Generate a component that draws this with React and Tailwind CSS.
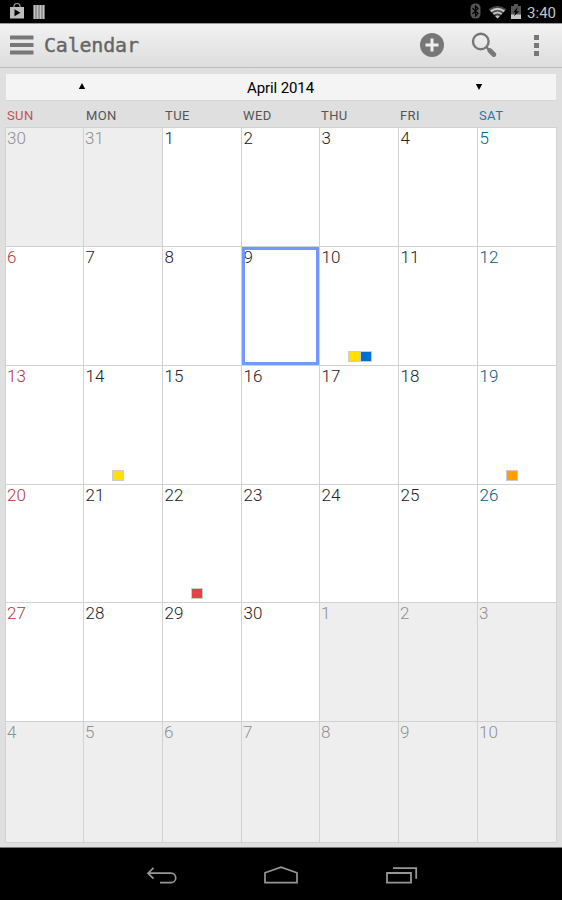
import React from "react";

const DAYS = ["SUN", "MON", "TUE", "WED", "THU", "FRI", "SAT"];

const EVENTS = {
  10: ["bg-[#ffe000]", "bg-[#0070d0]"],
  14: ["bg-[#ffe000]"],
  19: ["bg-[#ffa000]"],
  22: ["bg-[#e94045]"],
};

const CELLS = Array.from({ length: 42 }, (_, i) => {
  const n = i - 1;
  if (n < 1) return { day: 30 + i, muted: true };
  if (n > 30) return { day: n - 30, muted: true };
  return { day: n, muted: false };
});

function textColor(col, muted) {
  if (muted) return "text-[#909090]";
  if (col === 0) return "text-[#b03a36]";
  if (col === 6) return "text-[#006088]";
  return "text-[#222]";
}

function StatusBar() {
  return (
    <div className="flex h-[23px] shrink-0 items-center bg-black pl-[9px] pr-[6px]">
      <svg width="16" height="17" viewBox="0 0 16 17" className="-mt-[2px]">
        <path d="M5 6V4q0-2.5 3-2.5T11 4v2" fill="none" stroke="#999" strokeWidth="1.2" />
        <path d="M1 5h14v11.5H1z" fill="#bdbdbd" />
        <path d="M5.5 7.2v7l6-3.5z" fill="#000" />
      </svg>
      <svg width="12" height="14" viewBox="0 0 12 14" className="ml-[8px]">
        <path d="M0.5 0h11v14H0.5z" fill="#777" />
        <path d="M1.5 0v14M4.5 0v14M7.5 0v14M10.5 0v14" stroke="#c4c4c4" strokeWidth="1.8" />
      </svg>
      <div className="flex-1" />
      <svg width="11" height="16" viewBox="0 0 11 16" className="-mt-px mr-[7px]">
        <rect x="0.5" y="0.5" width="10" height="15" rx="4.5" fill="#555" />
        <path d="M2.5 5l5.5 5.5L5.5 13V3L8 5.5 2.5 11" fill="none" stroke="#000" strokeWidth="1.2" />
      </svg>
      <svg width="19" height="14" viewBox="0 0 19 14" className="mr-[4px]">
        <path d="M0.5 4.3Q9.5-3 18.5 4.3L9.5 13.5z" fill="#444" />
        <path d="M2.7 6.4Q9.5 1.2 16.3 6.4" fill="none" stroke="#c6c6c6" strokeWidth="2.2" />
        <path d="M5.3 9Q9.5 5.9 13.7 9" fill="none" stroke="#c6c6c6" strokeWidth="2" />
        <path d="M7.3 11.2Q9.5 9.8 11.7 11.2L9.5 13.5z" fill="#c6c6c6" />
      </svg>
      <svg width="10" height="15" viewBox="0 0 10 15" className="-mt-px mr-[6px]">
        <path d="M3 0h4v2h3v13H0V2h3z" fill="#555" />
        <path d="M0 10.5h10V15H0z" fill="#c6c6c6" />
        <path d="M6.8 3L2.2 8.2h2.3L3 12.3 8 7.2H5.4z" fill="#000" />
      </svg>
      <span className="mt-[3px] text-[15px] leading-none text-[#c4c4c4]">3:40</span>
    </div>
  );
}

function Header() {
  return (
    <div className="flex h-[45px] shrink-0 items-center border-b border-t border-b-[#bcbcbc] border-t-[#999] bg-linear-to-b from-[#f2f2f2] to-[#dddddd] pb-px pl-[10px]">
      <svg width="24" height="20" viewBox="0 0 24 20" fill="#777">
        <rect x="0" y="0.5" width="23.5" height="4" rx="0.6" />
        <rect x="0" y="8" width="23.5" height="4" rx="0.6" />
        <rect x="0" y="15.5" width="23.5" height="4" rx="0.6" />
      </svg>
      <span className="ml-[10px] font-['DejaVu_Sans_Mono',monospace] text-[20px] leading-none tracking-[-0.2px] text-[#666] [-webkit-text-stroke:0.4px_#666]">
        Calendar
      </span>
      <div className="flex-1" />
      <svg width="24" height="24" viewBox="0 0 24 24" className="mr-[27px]">
        <circle cx="12" cy="12" r="12" fill="#777" />
        <path d="M12 5.5v13M5.5 12h13" stroke="#eee" strokeWidth="3" />
      </svg>
      <svg width="26" height="26" viewBox="0 0 26 26" className="mr-[37px]">
        <circle cx="9.8" cy="9.5" r="7.8" fill="none" stroke="#777" strokeWidth="2.4" />
        <path d="M15.3 15l3 3" stroke="#777" strokeWidth="2.4" />
        <path d="M18.8 18.5l4 4" stroke="#777" strokeWidth="4.8" strokeLinecap="round" />
      </svg>
      <div className="mr-[23px] flex w-[5px] flex-col gap-[3px]">
        <i className="h-[5px] bg-[#777]" />
        <i className="h-[5px] bg-[#777]" />
        <i className="h-[5px] bg-[#777]" />
      </div>
    </div>
  );
}

function MonthBar() {
  return (
    <div className="mx-[6px] mt-[6px] grid h-[27px] shrink-0 grid-cols-[152px_245px_153px] items-center border-b border-[#d6d6d6] bg-[#f4f4f4] text-black">
      <svg width="8" height="6" viewBox="0 0 8 6" className="-mt-[2px] justify-self-center">
        <path d="M4 0l3.2 6H0.8z" />
      </svg>
      <span className="pt-[2px] text-center text-[15px] leading-none tracking-[-0.1px]">April 2014</span>
      <svg width="8" height="6" viewBox="0 0 8 6" className="-mt-px ml-[72px]">
        <path d="M4 6L0.8 0h6.4z" />
      </svg>
    </div>
  );
}

function Cell({ cell, index }) {
  const col = index % 7;
  const selected = cell.day === 9 && !cell.muted;
  const events = cell.muted ? null : EVENTS[cell.day];
  return (
    <div
      className={`relative border-l border-t border-[#d2d2d2] ${cell.muted ? "bg-[#eeeeee]" : "bg-white"} ${textColor(col, cell.muted)}`}
    >
      <span className={`block pt-[2px] text-[17px] font-light leading-none ${!cell.muted && col > 0 ? "pl-[1.5px]" : "pl-px"}`}>
        {cell.day}
      </span>
      {selected && <div className="absolute inset-0 border-[3px] border-[#7396ff]" />}
      {events && (
        <div className="absolute bottom-[3px] left-[28px] flex">
          {events.map((color) => (
            <i key={color} className={`h-[11px] w-[12px] border border-[#ccc] ${color}`} />
          ))}
        </div>
      )}
    </div>
  );
}

function NavBar() {
  return (
    <div className="flex h-[53px] shrink-0 items-center border-t border-[#777] bg-black pl-[145px] pt-[3px]">
      <svg width="32" height="20" viewBox="0 0 32 20" fill="none" stroke="#969696" strokeWidth="1.7">
        <path d="M8.5 1.8L3 7.2l5.5 5.4M3 7.2h23a4.7 4.7 0 0 1 0 9.4H15" />
      </svg>
      <svg width="36" height="20" viewBox="0 0 36 20" className="ml-[86px]" fill="none" stroke="#969696" strokeWidth="1.7">
        <path d="M2 16.6V6.8L18 1.2l16 5.6v9.8z" />
      </svg>
      <svg width="34" height="20" viewBox="0 0 34 20" className="ml-[86px]" fill="none" stroke="#969696" strokeWidth="1.8">
        <path d="M2 7h24v9.6H2zM8 2.2h23.2v10.5" />
      </svg>
    </div>
  );
}

export default function App() {
  return (
    <div className="flex h-[900px] w-[562px] flex-col overflow-hidden bg-[#dfdfdf] font-[Roboto,sans-serif]">
      <StatusBar />
      <Header />
      <MonthBar />
      <div className="ml-[5px] grid h-[26px] shrink-0 grid-cols-[79px_79px_78px_78px_79px_79px_79px] pl-[2px] pt-[8px] text-[13px] leading-none tracking-[0.4px]">
        {DAYS.map((day, col) => (
          <span key={day} className={col === 0 ? "text-[#c45350]" : col === 6 ? "text-[#1c7ba3]" : "text-[#555]"}>
            {day}
          </span>
        ))}
      </div>
      <div className="ml-[5px] grid w-[552px] shrink-0 grid-cols-[78px_79px_79px_78px_79px_79px_79px] grid-rows-[119px_119px_119px_118px_119px_121px] border-b border-r border-[#d2d2d2]">
        {CELLS.map((cell, i) => (
          <Cell key={i} cell={cell} index={i} />
        ))}
      </div>
      <div className="flex-1" />
      <NavBar />
    </div>
  );
}
